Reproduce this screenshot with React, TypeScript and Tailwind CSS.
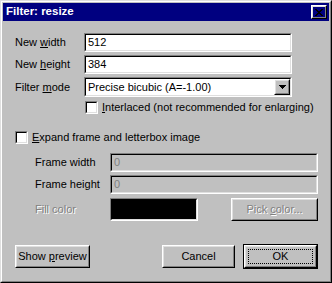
import React from "react";

const raised =
  "border border-t-white border-l-white border-r-black border-b-black";
const raisedInner =
  "border border-t-[#dfdfdf] border-l-[#dfdfdf] border-r-[#808080] border-b-[#808080]";
const sunken =
  "border border-t-[#808080] border-l-[#808080] border-r-white border-b-white";
const sunkenInner =
  "border border-t-black border-l-black border-r-[#dfdfdf] border-b-[#dfdfdf]";

function Edit({ value, width, disabled }: { value: string; width: string; disabled?: boolean }) {
  return (
    <div className={`${sunken} ${width} h-[19px] flex`}>
      <div
        className={`${sunkenInner} flex-1 flex items-center pl-[2px] ${
          disabled ? "bg-[#c0c0c0] text-[#808080]" : "bg-white text-black"
        }`}
      >
        {value}
      </div>
    </div>
  );
}

function Button({
  children,
  width,
  disabled,
  isDefault,
}: {
  children: React.ReactNode;
  width: string;
  disabled?: boolean;
  isDefault?: boolean;
}) {
  if (isDefault) {
    return (
      <div className={`${width} h-[25px] border border-black flex`}>
        <div className={`${raised} flex-1 flex`}>
          <div className={`${raisedInner} flex-1 flex p-[2px]`}>
            <div className="flex-1 border border-dotted border-black flex items-center justify-center">
              <span>{children}</span>
            </div>
          </div>
        </div>
      </div>
    );
  }
  return (
    <div className={`${raised} ${width} h-[23px] flex`}>
      <div
        className={`${raisedInner} flex-1 flex items-center justify-center ${
          disabled ? "text-[#808080] [text-shadow:1px_1px_0_#fff]" : ""
        }`}
      >
        <span>{children}</span>
      </div>
    </div>
  );
}

function Check({ children }: { children: React.ReactNode }) {
  return (
    <div className="flex items-center">
      <div className={`${sunken} w-[13px] h-[13px] flex`}>
        <div className={`${sunkenInner} flex-1 bg-white`} />
      </div>
      <span className="ml-[4px]">{children}</span>
    </div>
  );
}

export default function App() {
  return (
    <div
      className="w-[332px] h-[283px] bg-[#c0c0c0] text-black text-[11px] leading-none flex border border-t-[#dfdfdf] border-l-[#dfdfdf] border-r-black border-b-black"
      style={{ fontFamily: '"Liberation Sans", Arial, sans-serif' }}
    >
      <div className="flex-1 flex flex-col p-px border border-t-white border-l-white border-r-[#808080] border-b-[#808080]">
        {/* Title bar */}
        <div className="h-[18px] bg-[#000080] flex items-center justify-between pl-[3px] pr-[2px]">
          <span className="text-white font-bold text-[11.5px]">Filter: resize</span>
          <div className={`${raised} w-[16px] h-[14px] flex`}>
            <div className={`${raisedInner} flex-1 flex items-center justify-center`}>
              <svg width="8" height="7" viewBox="0 0 8 7" shapeRendering="crispEdges">
                <path
                  d="M0 0h2v1H0zM6 0h2v1H6zM1 1h2v1H1zM5 1h2v1H5zM2 2h4v1H2zM3 3h2v1H3zM2 4h4v1H2zM1 5h2v1H1zM5 5h2v1H5zM0 6h2v1H0zM6 6h2v1H6z"
                  fill="#000"
                />
              </svg>
            </div>
          </div>
        </div>

        {/* Body */}
        <div className="flex flex-col pl-[12px]">
          <div className="flex items-center mt-[12px]">
            <span className="w-[69px]">
              New <u>w</u>idth
            </span>
            <Edit value="512" width="w-[208px]" />
          </div>
          <div className="flex items-center mt-[3px]">
            <span className="w-[69px]">
              New <u>h</u>eight
            </span>
            <Edit value="384" width="w-[208px]" />
          </div>
          <div className="flex items-center mt-[3px]">
            <span className="w-[69px]">
              Filter <u>m</u>ode
            </span>
            <div className={`${sunken} w-[208px] h-[20px] flex`}>
              <div className={`${sunkenInner} flex-1 flex items-center bg-white pl-[2px]`}>
                <span className="flex-1">Precise bicubic (A=-1.00)</span>
                <div className={`${raised} w-[16px] h-[16px] flex`}>
                  <div className={`${raisedInner} flex-1 flex items-center justify-center bg-[#c0c0c0]`}>
                    <svg width="7" height="4" viewBox="0 0 7 4" shapeRendering="crispEdges">
                      <path d="M0 0h7v1H0zM1 1h5v1H1zM2 2h3v1H2zM3 3h1v1H3z" fill="#000" />
                    </svg>
                  </div>
                </div>
              </div>
            </div>
          </div>
          <div className="mt-[4px] ml-[70px]">
            <Check>
              <u>I</u>nterlaced (not recommended for enlarging)
            </Check>
          </div>

          <div className="mt-[17px]">
            <Check>
              <u>E</u>xpand frame and letterbox image
            </Check>
          </div>

          <div className="flex items-center mt-[9px] pl-[20px]">
            <span className="w-[75px]">Frame width</span>
            <Edit value="0" width="w-[208px]" disabled />
          </div>
          <div className="flex items-center mt-[3px] pl-[20px]">
            <span className="w-[75px]">Frame height</span>
            <Edit value="0" width="w-[208px]" disabled />
          </div>
          <div className="flex items-center mt-[4px] pl-[20px]">
            <span className="w-[75px] text-[#808080] [text-shadow:1px_1px_0_#fff]">Fill color</span>
            <div className={`${sunken} w-[88px] h-[23px] flex`}>
              <div className={`${sunkenInner} flex-1 bg-black`} />
            </div>
            <div className="ml-[33px]">
              <Button width="w-[87px]" disabled>
                Pick <u>c</u>olor...
              </Button>
            </div>
          </div>

          <div className="flex items-center mt-[23px]">
            <Button width="w-[75px]">
              Show <u>p</u>review
            </Button>
            <div className="ml-auto mr-[11px] flex items-center gap-[8px]">
              <Button width="w-[73px]">Cancel</Button>
              <Button width="w-[75px]" isDefault>
                OK
              </Button>
            </div>
          </div>
        </div>
      </div>
    </div>
  );
}
